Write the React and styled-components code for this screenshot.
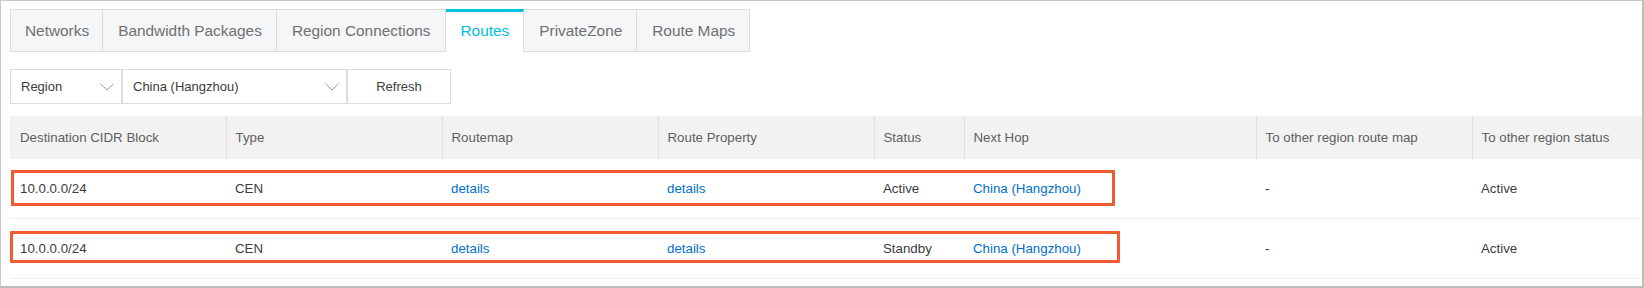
import React from "react";
import styled, {createGlobalStyle, css} from "styled-components";

const GlobalStyle = createGlobalStyle`
  html, body {
    margin: 0;
    padding: 0;
    background: #fff;
  }

  body {
    font-family: "Liberation Sans", Arial, sans-serif;
  }
`

const Frame = styled.div`
  box-sizing: border-box;
  width: 1644px;
  height: 288px;
  border: 1px solid #c9c9c9;
  border-right: 2px solid #bdbdbd;
  border-bottom: 2px solid #bdbdbd;
  padding: 8px 0 0 9px;
  overflow: hidden;
  background: #fff;
`

const TabBar = styled.div`
  display: flex;
  height: 43px;
`

const Tab = styled.div`
  box-sizing: border-box;
  height: 43px;
  display: flex;
  align-items: center;
  padding: 0 14px 0 15px;
  font-size: 15.4px;
  color: #707070;
  background: #f5f6f8;
  border: 1px solid #dcdcdc;
  border-left: none;
  white-space: nowrap;
  cursor: pointer;

  &:first-child {
    border-left: 1px solid #dcdcdc;
    padding: 0 13px 0 14px;
  }

  ${props => props.$active && css`
    background: #fff;
    color: #00c1de;
    border-top: 3px solid #00c1de;
    border-bottom-color: #fff;
    padding-bottom: 2px;
  `}
`

const Toolbar = styled.div`
  display: flex;
  margin-top: 17px;
`

const SelectBox = styled.div`
  box-sizing: border-box;
  width: ${props => props.$width}px;
  height: 35px;
  display: flex;
  align-items: center;
  justify-content: space-between;
  padding: 0 7px 0 10px;
  border: 1px solid #dcdcdc;
  font-size: 13px;
  color: #3c3c3c;
`

const Chevron = styled.svg`
  width: 14px;
  height: 8px;
  flex-shrink: 0;
`

const RefreshButton = styled.button`
  box-sizing: border-box;
  width: 104px;
  height: 35px;
  border: 1px solid #dcdcdc;
  background: #fff;
  font-family: inherit;
  font-size: 13px;
  color: #3c3c3c;
  padding: 0;
`

const TableWrap = styled.div`
  position: relative;
  margin-top: 12px;
`

const Table = styled.table`
  width: 1678px;
  table-layout: fixed;
  border-collapse: collapse;
  font-size: 13.3px;
`

const HeadCell = styled.th`
  height: 43px;
  padding: 0 9px;
  background: #f2f2f2;
  color: #5e5e5e;
  font-weight: normal;
  text-align: left;
  white-space: nowrap;
  border-left: 1px solid #e0e0e0;

  &:first-child {
    border-left: none;
    padding-left: 10px;
  }
`

const Cell = styled.td`
  height: 59px;
  padding: 0 9px;
  color: #3c3c3c;
  white-space: nowrap;
  border-bottom: 1px solid #ededed;

  &:first-child {
    padding-left: 10px;
  }
`

const Link = styled.a`
  color: #0070cc;
  text-decoration: none;
  cursor: pointer;
`

// red annotation frames drawn over the two highlighted rows
const Highlight = styled.div`
  position: absolute;
  box-sizing: border-box;
  top: ${props => props.$top}px;
  left: ${props => props.$left}px;
  width: ${props => props.$width}px;
  height: ${props => props.$height}px;
  border: 3px solid #f25a32;
  border-radius: 1px;
  pointer-events: none;
`

const tabs = ["Networks", "Bandwidth Packages", "Region Connections", "Routes", "PrivateZone", "Route Maps"];

const columns = [
    {title: "Destination CIDR Block", width: 216},
    {title: "Type", width: 216},
    {title: "Routemap", width: 216},
    {title: "Route Property", width: 216},
    {title: "Status", width: 90},
    {title: "Next Hop", width: 292},
    {title: "To other region route map", width: 216},
    {title: "To other region status", width: 216},
];

const routes = [
    {cidr: "10.0.0.0/24", type: "CEN", status: "Active", hop: "China (Hangzhou)", otherMap: "-", otherStatus: "Active"},
    {cidr: "10.0.0.0/24", type: "CEN", status: "Standby", hop: "China (Hangzhou)", otherMap: "-", otherStatus: "Active"},
];

function ChevronIcon() {
    return (
        <Chevron viewBox="0 0 14 8">
            <polyline points="0.5,0.8 7,7 13.5,0.8" fill="none" stroke="#9a9a9a" strokeWidth="1"/>
        </Chevron>
    )
}

export default function App() {
    return (<>
        <GlobalStyle/>
        <Frame>
            <TabBar>
                {tabs.map(t => <Tab key={t} $active={t === "Routes"}>{t}</Tab>)}
            </TabBar>

            <Toolbar>
                <SelectBox $width={112}>Region<ChevronIcon/></SelectBox>
                <SelectBox $width={225}>China (Hangzhou)<ChevronIcon/></SelectBox>
                <RefreshButton>Refresh</RefreshButton>
            </Toolbar>

            <TableWrap>
                <Table>
                    <colgroup>
                        {columns.map(c => <col key={c.title} style={{width: c.width}}/>)}
                    </colgroup>
                    <thead>
                    <tr>
                        {columns.map(c => <HeadCell key={c.title}>{c.title}</HeadCell>)}
                    </tr>
                    </thead>
                    <tbody>
                    {routes.map((r, i) => (
                        <tr key={i}>
                            <Cell>{r.cidr}</Cell>
                            <Cell>{r.type}</Cell>
                            <Cell><Link>details</Link></Cell>
                            <Cell><Link>details</Link></Cell>
                            <Cell>{r.status}</Cell>
                            <Cell><Link>{r.hop}</Link></Cell>
                            <Cell>{r.otherMap}</Cell>
                            <Cell>{r.otherStatus}</Cell>
                        </tr>
                    ))}
                    </tbody>
                </Table>
                <Highlight $top={54} $left={1} $width={1104} $height={36}/>
                <Highlight $top={115} $left={0} $width={1110} $height={32}/>
            </TableWrap>
        </Frame>
    </>)
}
